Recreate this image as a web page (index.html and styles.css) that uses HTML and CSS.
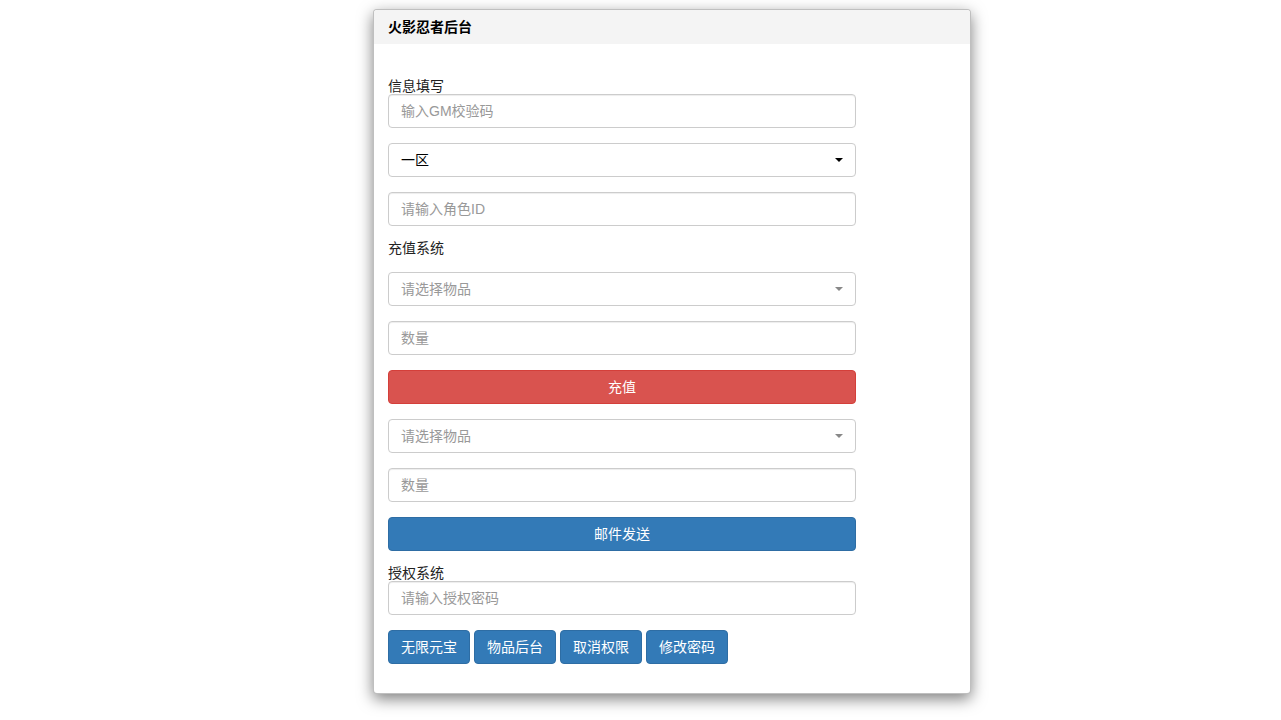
FILE: index.html
```html
<!DOCTYPE html>
<html lang="zh-CN">
  <head>
    <meta charset="UTF-8" />
    <meta name="viewport" content="width=device-width, initial-scale=1.0" />
    <title>火影忍者后台</title>
    <link rel="stylesheet" href="styles.css">
  </head>
  <body>
    <div class="panel">
      <div class="panel-heading">火影忍者后台</div>
      <div class="panel-body">
        <!-- 信息填写 -->
        <label class="group-label">信息填写</label>
        <input class="form-control" type="text" placeholder="输入GM校验码" />
        <div class="select-box">
          <span>一区</span>
          <i class="caret"></i>
        </div>
        <input class="form-control" type="text" placeholder="请输入角色ID" />

        <!-- 充值系统 -->
        <label class="group-label spaced">充值系统</label>
        <div class="select-box placeholder">
          <span>请选择物品</span>
          <i class="caret"></i>
        </div>
        <input class="form-control" type="text" placeholder="数量" />
        <button class="btn btn-danger btn-block">充值</button>
        <div class="select-box placeholder">
          <span>请选择物品</span>
          <i class="caret"></i>
        </div>
        <input class="form-control" type="text" placeholder="数量" />
        <button class="btn btn-primary btn-block">邮件发送</button>

        <!-- 授权系统 -->
        <label class="group-label">授权系统</label>
        <input class="form-control" type="text" placeholder="请输入授权密码" />
        <div class="btn-row">
          <button class="btn btn-primary">无限元宝</button>
          <button class="btn btn-primary">物品后台</button>
          <button class="btn btn-primary">取消权限</button>
          <button class="btn btn-primary">修改密码</button>
        </div>
      </div>
    </div>
  </body>
</html>
```

FILE: styles.css
```css
body {
  margin: 0;
  padding-bottom: 30px;
  background: #fff;
  font-family: "Liberation Sans", "Noto Sans CJK SC", sans-serif;
  font-size: 14px;
  line-height: 20px;
  color: #333;
}

.panel {
  width: 598px;
  box-sizing: border-box;
  margin: 9px 0 0 373px;
  border: 1px solid rgba(0, 0, 0, 0.25);
  border-radius: 4px;
  box-shadow: 0 5px 15px rgba(0, 0, 0, 0.5);
  background: #fff;
}

.panel-heading {
  padding: 7px 14px;
  background: #f4f4f4;
  border-radius: 3px 3px 0 0;
  font-weight: bold;
  color: #000;
}

.panel-body {
  display: flex;
  flex-direction: column;
  width: 468px;
  padding: 30px 14px 29px;
}

.group-label {
  display: block;
  padding-top: 4px;
  line-height: 16px;
  color: #222;
}

.group-label.spaced {
  margin: -3px 0 14px;
  padding-top: 0;
  line-height: 20px;
}

.form-control,
.select-box {
  box-sizing: border-box;
  height: 34px;
  width: 100%;
  margin: 0 0 15px;
  padding: 6px 12px;
  border: 1px solid #ccc;
  border-radius: 4px;
  font: inherit;
  color: #555;
  box-shadow: inset 0 1px 1px rgba(0, 0, 0, 0.075);
}

.form-control::placeholder {
  color: #999;
}

.select-box {
  display: flex;
  align-items: center;
  justify-content: space-between;
  color: #000;
  box-shadow: none;
}

.select-box.placeholder {
  color: #999;
}

.caret {
  width: 0;
  height: 0;
  border-top: 4px solid #000;
  border-left: 4px solid transparent;
  border-right: 4px solid transparent;
}

.select-box.placeholder .caret {
  border-top-color: #888;
}

.btn {
  box-sizing: border-box;
  height: 34px;
  padding: 6px 12px;
  border: 1px solid transparent;
  border-radius: 4px;
  font: inherit;
  color: #fff;
  cursor: pointer;
}

.btn-block {
  width: 100%;
  margin-bottom: 15px;
}

.btn-block.btn-primary {
  margin-bottom: 10px;
}

.btn-danger {
  background: #d9534f;
  border-color: #d43f3a;
}

.btn-primary {
  background: #337ab7;
  border-color: #2e6da4;
}

.btn-row {
  display: flex;
  gap: 4px;
}

.btn-row .btn {
  width: 82px;
  padding: 6px 0;
}
```
